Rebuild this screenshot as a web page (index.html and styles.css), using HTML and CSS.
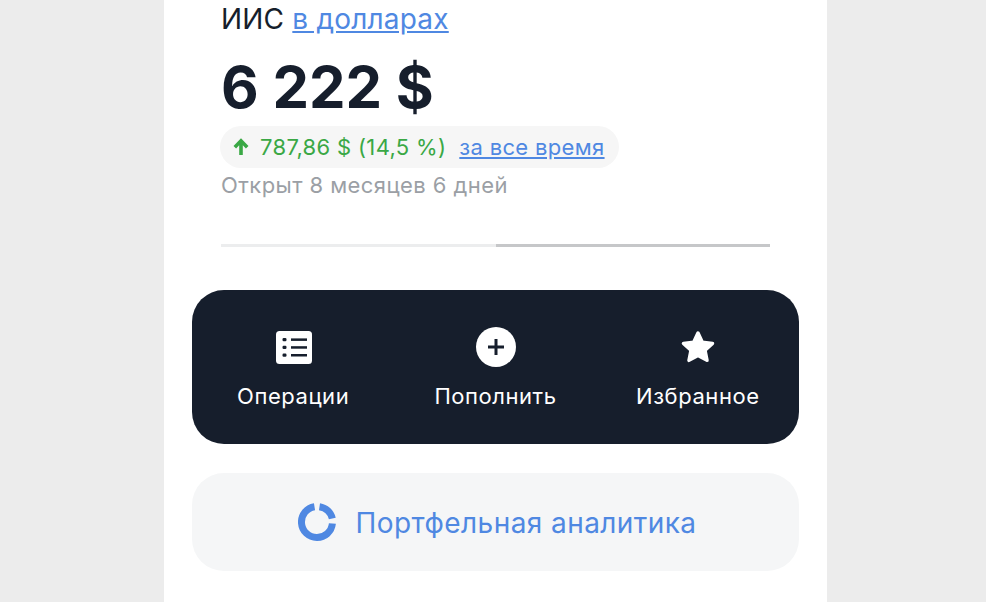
FILE: index.html
```html
<!DOCTYPE html>
<html lang="ru">
<head>
    <meta charset="UTF-8">
    <meta name="viewport" content="width=device-width, initial-scale=1.0">
    <title>ИИС в долларах</title>
    <link rel="stylesheet" href="styles.css">
</head>
<body>

<main class="screen">
    <section class="summary">
        <p class="account">ИИС <a href="#">в долларах</a></p>
        <h1 class="total">6 222 $</h1>
        <p class="profit">
            <svg class="arrow" viewBox="0 0 16 18" width="16" height="18"><path d="M8 17V3M1.800 9.200 8 2.800l6.200 6.400" fill="none" stroke="#3aa845" stroke-width="3.600"/></svg>
            <span class="profit-value">787,86 $ (14,5 %)</span>
            <a href="#">за все время</a>
        </p>
        <p class="opened">Открыт 8 месяцев 6 дней</p>
    </section>

    <div class="pager">
        <span class="pager-part"></span>
        <span class="pager-part pager-active"></span>
    </div>

    <nav class="actions">
        <a class="action" href="#">
            <span class="action-icon">
                <svg viewBox="0 0 36 33" width="36" height="33">
                    <rect width="36" height="33" rx="3.500" fill="#fff"/>
                    <g fill="#161e2c">
                        <rect x="6.500" y="7" width="4" height="3.200" rx="1.200"/>
                        <rect x="6.500" y="14.800" width="4" height="3.200" rx="1.200"/>
                        <rect x="6.500" y="22.600" width="4" height="3.200" rx="1.200"/>
                        <rect x="15" y="7.400" width="16" height="2.500"/>
                        <rect x="15" y="15.200" width="16" height="2.500"/>
                        <rect x="15" y="23" width="16" height="2.500"/>
                    </g>
                </svg>
            </span>
            <span>Операции</span>
        </a>
        <a class="action" href="#">
            <span class="action-icon">
                <svg viewBox="0 0 40 40" width="40" height="40">
                    <circle cx="20" cy="20" r="20" fill="#fff"/>
                    <path d="M20 12v16M12 20h16" stroke="#161e2c" stroke-width="3" fill="none"/>
                </svg>
            </span>
            <span>Пополнить</span>
        </a>
        <a class="action" href="#">
            <span class="action-icon">
                <svg viewBox="0 0 36 36" width="36" height="36">
                    <path d="M18 4l4.300 9.200 10.200 1.200-7.500 6.900 2 10L18 26.400l-9 4.900 2-10-7.500-6.900 10.200-1.200z" fill="#fff" stroke="#fff" stroke-width="3.500" stroke-linejoin="round"/>
                </svg>
            </span>
            <span>Избранное</span>
        </a>
    </nav>

    <a class="analytics" href="#">
        <svg viewBox="0 0 38 38" width="38" height="38">
            <g fill="none" stroke="#4f88e2" stroke-width="7">
                <path d="M16.500 3.700A15.500 15.500 0 1 0 34.400 20.500"/>
                <path d="M21.500 3.700A15.500 15.500 0 0 1 34.300 15.500"/>
            </g>
        </svg>
        <span class="analytics-text">Портфельная аналитика</span>
    </a>
</main>

</body>
</html>
```

FILE: styles.css
```css
html, body {
    margin: 0;
    height: 100%;
    overflow: hidden;
}
body {
    background-color: #ececec;
    font-family: Inter, "Liberation Sans", sans-serif;
    color: #161e2c;
}
a {
    color: #4f88e2;
}
p, h1 {
    margin: 0;
}
.screen {
    width: 663px;
    height: 602px;
    margin-left: 164px;
    padding: 0 28px;
    box-sizing: border-box;
    background-color: #fff;
}
.summary {
    padding: 0 29px;
}
.account {
    padding-top: 1px;
    font-size: 28px;
    line-height: 36px;
    letter-spacing: 0.2px;
}
.total {
    margin-top: 15px;
    font-size: 58px;
    line-height: 70px;
    font-weight: 700;
}
.profit {
    display: inline-flex;
    align-items: center;
    height: 42px;
    margin: 4px 0 0 -1px;
    padding: 0 14px 0 13px;
    border-radius: 21px;
    background-color: #f6f6f6;
    font-size: 22px;
    letter-spacing: 0.33px;
}
.arrow {
    margin-right: 11px;
}
.profit-value {
    margin-right: 13px;
    color: #3aa845;
}
.opened {
    font-size: 22px;
    line-height: 34px;
    letter-spacing: 0.44px;
    color: #9b9fa5;
}
.pager {
    display: flex;
    margin: 42px 29px 0;
}
.pager-part {
    flex: 1;
    height: 3px;
    background-color: #ecedee;
}
.pager-active {
    background-color: #c6c7c9;
}
.actions {
    display: grid;
    grid-template-columns: repeat(3, 1fr);
    height: 154px;
    margin-top: 43px;
    padding-top: 37px;
    box-sizing: border-box;
    border-radius: 32px;
    background-color: #161e2c;
}
.action {
    display: flex;
    flex-direction: column;
    align-items: center;
    gap: 16px;
    color: #fff;
    font-size: 22px;
    letter-spacing: 0.55px;
    text-decoration: none;
}
.action-icon {
    display: flex;
    align-items: center;
    height: 40px;
    padding-left: 1px;
}
.analytics {
    display: flex;
    align-items: center;
    justify-content: center;
    gap: 20px;
    height: 98px;
    margin-top: 29px;
    padding-left: 3px;
    border-radius: 32px;
    background-color: #f5f6f7;
    font-size: 28px;
    letter-spacing: 0.42px;
    text-decoration: none;
}
.analytics-text {
    padding-top: 2px;
}
```
